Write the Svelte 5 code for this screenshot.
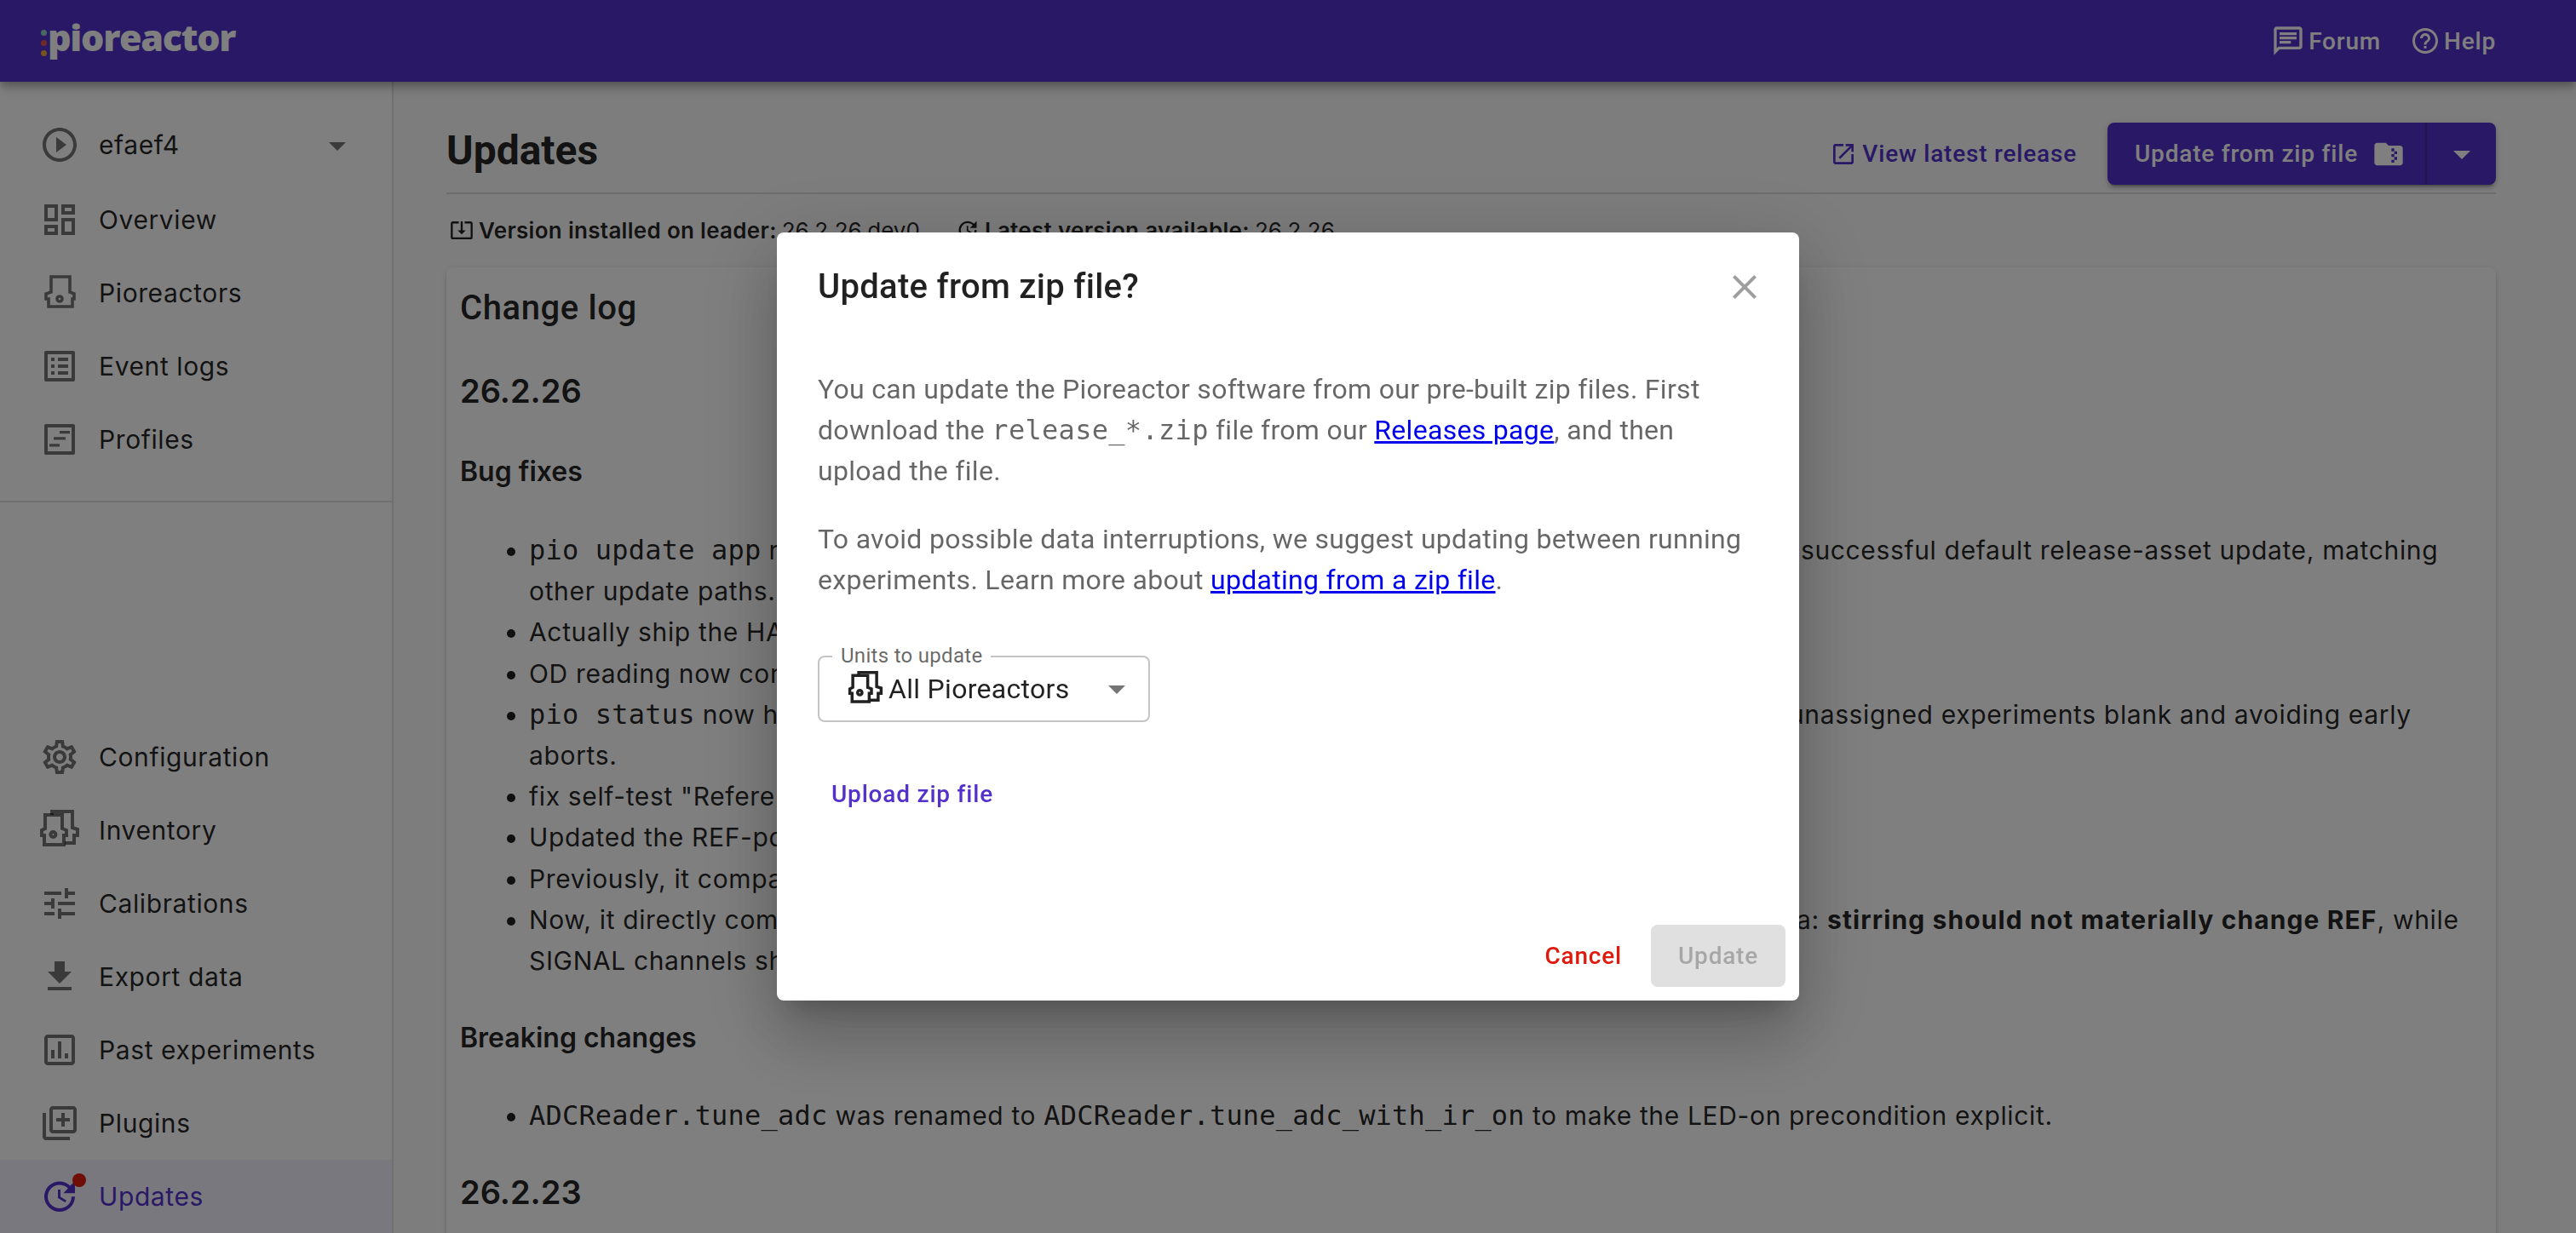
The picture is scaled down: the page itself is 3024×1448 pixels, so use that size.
<script lang="ts">
  const PIO = "M7 2.5H18V11.5L20.5 12.5V15.5H19.5V20H5.5V15.5H4V12.5L7 11.5Z";
  const BOX = "M19 5v14H5V5h14m1.1-2H3.9c-.5 0-.9.4-.9.9v16.2c0 .4.4.9.9.9h16.2c.4 0 .9-.5.9-.9V3.9c0-.5-.5-.9-.9-.9z";

  const topNav = [
    { label: "Overview", d: "M19 5v2h-4V5h4M9 5v6H5V5h4m10 8v6h-4v-6h4M9 17v2H5v-2h4M21 3h-8v6h8V3zM11 3H3v10h8V3zm10 8h-8v10h8V11zm-10 4H3v6h8v-6z" },
    { label: "Pioreactors", kind: "pio" },
    { label: "Event logs", d: BOX + "M11 7h6v2h-6V7zm0 4h6v2h-6v-2zm0 4h6v2h-6zM7 7h2v2H7zm0 4h2v2H7zm0 4h2v2H7z" },
    { label: "Profiles", d: BOX + "M12 7h6v1.6h-6zM8.5 10.6h7v1.6h-7zM6 14.6h6v1.6H6z" },
  ];
  const bottomNav = [
    { label: "Configuration", d: "M19.43 12.98c.04-.32.07-.64.07-.98 0-.34-.03-.66-.07-.98l2.11-1.65c.19-.15.24-.42.12-.64l-2-3.46c-.09-.16-.26-.25-.44-.25-.06 0-.12.01-.17.03l-2.49 1c-.52-.4-1.08-.73-1.69-.98l-.38-2.65C14.46 2.18 14.25 2 14 2h-4c-.25 0-.46.18-.49.42l-.38 2.65c-.61.25-1.17.59-1.69.98l-2.49-1c-.06-.02-.12-.03-.18-.03-.17 0-.34.09-.43.25l-2 3.46c-.13.22-.07.49.12.64l2.11 1.65c-.04.32-.07.65-.07.98 0 .33.03.66.07.98l-2.11 1.65c-.19.15-.24.42-.12.64l2 3.46c.09.16.26.25.44.25.06 0 .12-.01.17-.03l2.49-1c.52.4 1.08.73 1.69.98l.38 2.65c.03.24.24.42.49.42h4c.25 0 .46-.18.49-.42l.38-2.65c.61-.25 1.17-.59 1.69-.98l2.49 1c.06.02.12.03.18.03.17 0 .34-.09.43-.25l2-3.46c.12-.22.07-.49-.12-.64l-2.11-1.65zm-1.98-1.71c.04.31.05.52.05.73 0 .21-.02.43-.05.73l-.14 1.13.89.7 1.08.84-.7 1.21-1.27-.51-1.04-.42-.9.68c-.43.32-.84.56-1.25.73l-1.06.43-.16 1.13-.2 1.35h-1.4l-.19-1.35-.16-1.13-1.06-.43c-.43-.18-.83-.41-1.23-.71l-.91-.7-1.06.43-1.27.51-.7-1.21 1.08-.84.89-.7-.14-1.13c-.03-.31-.05-.54-.05-.74s.02-.43.05-.73l.14-1.13-.89-.7-1.08-.84.7-1.21 1.27.51 1.04.42.9-.68c.43-.32.84-.56 1.25-.73l1.06-.43.16-1.13.2-1.35h1.39l.19 1.35.16 1.13 1.06.43c.43.18.83.41 1.23.71l.91.7 1.06-.43 1.27-.51.7 1.21-1.07.85-.89.7.14 1.13zM12 8c-2.21 0-4 1.79-4 4s1.79 4 4 4 4-1.79 4-4-1.79-4-4-4zm0 6c-1.1 0-2-.9-2-2s.9-2 2-2 2 .9 2 2-.9 2-2 2z" },
    { label: "Inventory", kind: "pios" },
    { label: "Calibrations", d: "M3 17v2h6v-2H3zM3 5v2h10V5H3zm10 16v-2h8v-2h-8v-2h-2v6h2zM7 9v2H3v2h4v2h2V9H7zm14 4v-2H11v2h10zm-6-4h2V7h4V5h-4V3h-2v6z" },
    { label: "Export data", d: "M5 20h14v-2H5v2zM19 9h-4V3H9v6H5l7 7 7-7z" },
    { label: "Past experiments", d: "M9 17H7v-5h2v5zm4 0h-2V7h2v10zm4 0h-2v-3h2v3zm2 2H5V5h14v14zm0-16H5c-1.1 0-2 .9-2 2v14c0 1.1.9 2 2 2h14c1.1 0 2-.9 2-2V5c0-1.1-.9-2-2-2z" },
    { label: "Plugins", d: "M4 6H2v14c0 1.1.9 2 2 2h14v-2H4V6zm16-4H8c-1.1 0-2 .9-2 2v12c0 1.1.9 2 2 2h12c1.1 0 2-.9 2-2V4c0-1.1-.9-2-2-2zm0 14H8V4h12v12zm-7-2h2v-3h3V9h-3V6h-2v3h-3v2h3z" },
  ];
  const UPDATE = "M21 10.12h-6.78l2.74-2.82c-2.73-2.7-7.15-2.8-9.88-.1-2.73 2.71-2.73 7.08 0 9.79s7.15 2.71 9.88 0C18.32 15.65 19 14.08 19 12.1h2c0 1.98-.88 4.55-2.64 6.29-3.51 3.48-9.21 3.48-12.72 0-3.5-3.47-3.53-9.11-.02-12.58s9.14-3.47 12.65 0L21 3v7.12zM12.5 8v4.25l3.5 2.08-.72 1.21L11 13V8h1.5z";
</script>

{#snippet pioIcon()}
  <svg class="icon" viewBox="0 0 24 24" fill="none" stroke="currentColor" stroke-width="1.8">
    <path d={PIO} /><circle cx="12" cy="15.5" r="1.5" />
  </svg>
{/snippet}

{#snippet piosIcon(cls)}
  <svg class={cls} viewBox="0 0 24 24" fill="none" stroke="currentColor" stroke-width="2">
    <path d="M3.5 3H13.5V11L16 12V15H14.5V20.5H3V15H1.5V12L3.5 11Z" />
    <path d="M7.5 3V1H19.5V10.5L22.5 11.5V15H20.5V19.5H15" />
    <circle cx="8.2" cy="14.5" r="1.5" />
  </svg>
{/snippet}

{#snippet navRow(item)}
  <div class="row">
    {#if item.kind === "pio"}
      {@render pioIcon()}
    {:else if item.kind === "pios"}
      {@render piosIcon("icon")}
    {:else}
      <svg class="icon" viewBox="0 0 24 24" fill="currentColor"><path d={item.d} /></svg>
    {/if}
    <span>{item.label}</span>
  </div>
{/snippet}

<div class="page">
  <header class="appbar">
    <div class="logo">
      <span class="dots"><i class="d1"></i><i class="d2"></i><i class="d3"></i></span>
      <span class="wordmark">pioreactor</span>
    </div>
    <nav class="toplinks">
      <span class="toplink">
        <svg class="ic40" viewBox="0 0 24 24" fill="currentColor"><path d="M20 2H4c-1.1 0-1.99.9-1.99 2L2 22l4-4h14c1.1 0 2-.9 2-2V4c0-1.1-.9-2-2-2zm0 14H5.17L4 17.17V4h16v12zM6 12h8v2H6zm0-3h12v2H6zm0-3h12v2H6z" /></svg>
        Forum
      </span>
      <span class="toplink">
        <svg class="ic36" viewBox="0 0 24 24" fill="currentColor"><path d="M11 18h2v-2h-2v2zm1-16C6.48 2 2 6.48 2 12s4.48 10 10 10 10-4.48 10-10S17.52 2 12 2zm0 18c-4.41 0-8-3.59-8-8s3.59-8 8-8 8 3.59 8 8-3.59 8-8 8zm0-14c-2.21 0-4 1.79-4 4h2c0-1.1.9-2 2-2s2 .9 2 2c0 2-3 1.75-3 5h2c0-2.25 3-2.5 3-5 0-2.21-1.79-4-4-4z" /></svg>
        Help
      </span>
    </nav>
  </header>

  <div class="body">
    <aside class="sidebar">
      <div class="group first">
        <div class="row lead">
          <svg class="icon" viewBox="0 0 24 24" fill="currentColor"><path d="M10 16.5l6-4.5-6-4.5v9zM12 2C6.48 2 2 6.48 2 12s4.48 10 10 10 10-4.48 10-10S17.52 2 12 2zm0 18c-4.41 0-8-3.59-8-8s3.59-8 8-8 8 3.59 8 8-3.59 8-8 8z" /></svg>
          <span class="grow">efaef4</span>
          <svg class="icon caret" viewBox="0 0 24 24" fill="currentColor"><path d="M7 10l5 5 5-5z" /></svg>
        </div>
        {#each topNav as item}
          {@render navRow(item)}
        {/each}
      </div>
      <hr class="rule" />
      <div class="group last">
        {#each bottomNav as item}
          {@render navRow(item)}
        {/each}
        <div class="row active">
          <span class="badged">
            <svg class="icon" viewBox="0 0 24 24" fill="currentColor"><path d={UPDATE} /></svg>
            <i class="badge"></i>
          </span>
          <span>Updates</span>
        </div>
      </div>
    </aside>

    <main class="main">
      <div class="head">
        <h1>Updates</h1>
        <div class="actions">
          <span class="release">
            <svg class="ic32" viewBox="0 0 24 24" fill="currentColor"><path d="M19 19H5V5h7V3H5c-1.11 0-2 .9-2 2v14c0 1.1.89 2 2 2h14c1.1 0 2-.9 2-2v-7h-2v7zM14 3v2h3.59l-9.83 9.83 1.41 1.41L19 6.41V10h2V3h-7z" /></svg>
            View latest release
          </span>
          <div class="split">
            <span class="split-main">
              Update from zip file
              <svg class="ic40" viewBox="0 0 24 24" fill="currentColor"><path d="M20 6h-8l-2-2H4c-1.1 0-1.99.9-1.99 2L2 18c0 1.1.9 2 2 2h16c1.1 0 2-.9 2-2V8c0-1.1-.9-2-2-2zm-2 6h-2v2h2v2h-2v2h-2v-2h2v-2h-2v-2h2v-2h-2V8h2v2h2v2z" /></svg>
            </span>
            <span class="split-arrow">
              <svg class="icon" viewBox="0 0 24 24" fill="currentColor"><path d="M7 10l5 5 5-5z" /></svg>
            </span>
          </div>
        </div>
      </div>

      <div class="versions">
        <span class="ver first-ver">
          <svg class="ic28" viewBox="0 0 24 24" fill="currentColor"><path d="M12 16.5l4-4h-3v-9h-2v9H8l4 4zm9-13h-6v1.99h6v14.03H3V5.49h6V3.5H3c-1.1 0-2 .9-2 2v14c0 1.1.9 2 2 2h18c1.1 0 2-.9 2-2v-14c0-1.1-.9-2-2-2z" /></svg>
          <b>Version installed on leader:</b>26.2.26.dev0
        </span>
        <span class="ver">
          <svg class="ic28" viewBox="0 0 24 24" fill="currentColor"><path d={UPDATE} /></svg>
          <b>Latest version available:</b>26.2.26
        </span>
      </div>

      <section class="card">
        <h2>Change log</h2>
        <h3>26.2.26</h3>
        <h4>Bug fixes</h4>
        <ul>
          <li><code>pio update app</code> runs the database migrations, and restarts all the web server, and workers after a successful default release-asset update, matching<br />other update paths.</li>
          <li>Actually ship the HAT firmware files inside the release archive.</li>
          <li>OD reading now correctly handles missing reference channels.</li>
          <li><code>pio status</code> now handles leader-only installs, and workers in the cluster gracefully, and leaving all unassigned experiments blank and avoiding early<br />aborts.</li>
          <li>fix self-test "Reference photodiode" check.</li>
          <li>Updated the REF-pd self-test logic.</li>
          <li>Previously, it compared unrelated values.</li>
          <li>Now, it directly compares the reference readings with the stirrer on and off, against the expected data: <strong>stirring should not materially change REF</strong>, while<br />SIGNAL channels should still respond.</li>
        </ul>
        <h4 class="breaking">Breaking changes</h4>
        <ul class="tight">
          <li><code>ADCReader.tune_adc</code> was renamed to <code>ADCReader.tune_adc_with_ir_on</code> to make the LED-on precondition explicit.</li>
        </ul>
        <h3 class="next">26.2.23</h3>
      </section>
    </main>
  </div>

  <div class="backdrop">
    <div class="dialog" role="dialog">
      <div class="dialog-title">
        <h5>Update from zip file?</h5>
        <svg class="close" viewBox="0 0 24 24" fill="currentColor"><path d="M19 6.41 17.59 5 12 10.59 6.41 5 5 6.41 10.59 12 5 17.59 6.41 19 12 13.41 17.59 19 19 17.59 13.41 12z" /></svg>
      </div>
      <div class="dialog-body">
        <p>You can update the Pioreactor software from our pre-built zip files. First download the <code>release_*.zip</code> file from our <a href="#top">Releases page</a>, and then upload the file.</p>
        <p>To avoid possible data interruptions, we suggest updating between running experiments. Learn more about <a href="#top">updating from a zip file</a>.</p>
        <div class="select">
          <span class="select-label">Units to update</span>
          {@render piosIcon("select-icon")}
          <span class="select-value">All Pioreactors</span>
          <svg class="icon select-caret" viewBox="0 0 24 24" fill="currentColor"><path d="M7 10l5 5 5-5z" /></svg>
        </div>
        <button class="upload">Upload zip file</button>
      </div>
      <div class="dialog-actions">
        <button class="cancel">Cancel</button>
        <button class="confirm" disabled>Update</button>
      </div>
    </div>
  </div>
</div>

<style>
  :global(body) {
    margin: 0;
    overflow: hidden;
  }

  .page {
    height: 1448px;
    display: flex;
    flex-direction: column;
    background: #fafafa;
    color: rgba(0, 0, 0, 0.87);
    font-family: Inter, "Liberation Sans", sans-serif;
    overflow: hidden;
  }

  .appbar {
    height: 96px;
    flex-shrink: 0;
    display: flex;
    align-items: center;
    justify-content: space-between;
    padding: 0 94px 0 48px;
    background: #5331ca;
    color: #fff;
    position: relative;
    z-index: 2;
    box-shadow: 0 4px 8px -2px rgba(0, 0, 0, 0.2), 0 8px 10px 0 rgba(0, 0, 0, 0.14), 0 2px 20px 0 rgba(0, 0, 0, 0.12);
  }

  .logo {
    display: flex;
    align-items: center;
    height: 44px;
    margin-top: -8px;
  }
  .dots {
    display: flex;
    flex-direction: column;
    gap: 5px;
    margin-top: 12px;
  }
  .dots i {
    width: 7px;
    height: 7px;
    border-radius: 50%;
    display: block;
  }
  .d1 { background: #8fd4c0; }
  .d2 { background: #e0554d; }
  .d3 { background: #f0a63c; }
  .wordmark {
    font-family: "Open Sans", sans-serif;
    font-weight: 800;
    font-size: 43px;
    letter-spacing: -1.3px;
    margin-left: 1px;
    line-height: 44px;
  }

  .toplinks {
    display: flex;
    align-items: center;
    gap: 34px;
  }
  .toplink {
    display: flex;
    align-items: center;
    gap: 4px;
    font-family: Roboto, sans-serif;
    font-weight: 500;
    font-size: 28px;
    letter-spacing: 0.8px;
  }

  .ic28 { width: 28px; height: 28px; flex-shrink: 0; }
  .ic32 { width: 32px; height: 32px; flex-shrink: 0; }
  .ic36 { width: 36px; height: 36px; flex-shrink: 0; }
  .ic40 { width: 40px; height: 40px; flex-shrink: 0; }
  .icon { width: 48px; height: 48px; flex-shrink: 0; }

  .body {
    flex: 1;
    display: flex;
    min-height: 0;
  }

  .sidebar {
    width: 460px;
    flex-shrink: 0;
    background: #fff;
    border-right: 2px solid rgba(0, 0, 0, 0.12);
    display: flex;
    flex-direction: column;
  }
  .group.first { padding-top: 31px; }
  .group.last { margin-top: auto; }
  .rule {
    margin: 29px 0 0;
    border: 0;
    border-top: 2px solid rgba(0, 0, 0, 0.12);
  }
  .row {
    height: 86px;
    display: flex;
    align-items: center;
    padding-left: 46px;
    gap: 22px;
    font-size: 30px;
    letter-spacing: 0.6px;
    color: rgba(0, 0, 0, 0.87);
  }
  .row.lead { margin-bottom: 2px; }
  .row .icon { color: rgba(0, 0, 0, 0.54); }
  .grow { flex: 1; }
  .caret { margin-right: 40px; margin-top: 2px; }
  .active {
    background: #f4f0ff;
    color: #5331ca;
  }
  .active .icon { color: #5331ca; }
  .badged {
    position: relative;
    display: flex;
  }
  .badge {
    position: absolute;
    width: 16px;
    height: 16px;
    border-radius: 50%;
    background: #df1a0c;
    top: -3px;
    left: 39px;
  }

  .main {
    flex: 1;
    min-width: 0;
    padding: 0 94px 0 62px;
  }
  .head {
    height: 132px;
    box-sizing: border-box;
    padding-top: 48px;
    display: flex;
    justify-content: space-between;
    align-items: flex-start;
    border-bottom: 2px solid rgba(0, 0, 0, 0.12);
  }
  h1 {
    margin: 2px 0 0;
    font-family: Roboto, sans-serif;
    font-size: 48px;
    font-weight: 700;
    line-height: 62px;
  }
  .actions {
    display: flex;
    align-items: center;
    gap: 36px;
    height: 73px;
  }
  .release {
    display: flex;
    align-items: center;
    gap: 6px;
    font-family: Roboto, sans-serif;
    font-weight: 500;
    font-size: 28px;
    letter-spacing: 0.8px;
    color: #5331ca;
  }
  .split {
    display: flex;
    width: 456px;
    height: 73px;
    border-radius: 8px;
    background: #5331ca;
    color: #fff;
    font-family: Roboto, sans-serif;
    font-weight: 500;
    font-size: 28px;
    letter-spacing: 0.8px;
    box-shadow: 0 6px 2px -4px rgba(0, 0, 0, 0.2), 0 4px 4px 0 rgba(0, 0, 0, 0.14), 0 2px 10px 0 rgba(0, 0, 0, 0.12);
  }
  .split-main {
    width: 375px;
    box-sizing: border-box;
    padding-left: 32px;
    display: flex;
    align-items: center;
    gap: 16px;
    border-right: 2px solid #432aa0;
  }
  .split-arrow {
    flex: 1;
    display: flex;
    align-items: center;
    justify-content: center;
  }

  .versions {
    display: flex;
    height: 86px;
    padding: 0 0 0 4px;
    font-size: 26px;
  }
  .ver {
    display: flex;
    align-items: center;
    height: 84px;
    gap: 6px;
  }
  .ver b { font-weight: 600; letter-spacing: 0.3px; }
  .first-ver { margin-right: 42px; }

  .card {
    background: #fff;
    border-radius: 8px;
    padding: 24px 16px 60px;
    box-shadow: 0 2px 2px -2px rgba(0, 0, 0, 0.2), 0 2px 2px 0 rgba(0, 0, 0, 0.14), 0 2px 6px 0 rgba(0, 0, 0, 0.12);
    font-size: 30px;
    letter-spacing: 0.65px;
    line-height: 48.2px;
    white-space: nowrap;
  }
  h2, h3, h4 {
    margin: 0;
    line-height: 48px;
    letter-spacing: 0;
  }
  h2 { font-size: 40px; font-weight: 500; font-family: Roboto, sans-serif; letter-spacing: 0.6px; }
  h3 { font-size: 38px; font-weight: 600; margin-top: 49px; }
  h4 { font-size: 32px; font-weight: 600; margin-top: 47px; }
  h4.breaking { margin-top: 43px; }
  h3.next { margin-top: 42px; }
  ul {
    margin: 44px 0 0;
    padding: 0 0 0 81px;
  }
  ul.tight { margin-top: 43px; }
  strong { font-weight: 700; letter-spacing: 1.1px; }
  code {
    font-family: "DejaVu Sans Mono", monospace;
    font-size: 32px;
    letter-spacing: 0.2px;
  }

  .backdrop {
    position: fixed;
    inset: 0;
    z-index: 10;
    background: rgba(0, 0, 0, 0.5);
    display: flex;
    align-items: center;
    justify-content: center;
  }
  .dialog {
    width: 1200px;
    height: 902px;
    box-sizing: border-box;
    display: flex;
    flex-direction: column;
    background: #fff;
    border-radius: 8px;
    font-family: Roboto, sans-serif;
    box-shadow: 0 22px 30px -14px rgba(0, 0, 0, 0.2), 0 48px 76px 6px rgba(0, 0, 0, 0.14), 0 18px 92px 16px rgba(0, 0, 0, 0.12);
  }
  .dialog-title {
    display: flex;
    align-items: center;
    justify-content: space-between;
    padding: 32px 40px 0 48px;
    height: 64px;
  }
  h5 {
    margin: 0;
    font-size: 40px;
    font-weight: 500;
    line-height: 64px;
    letter-spacing: 0.3px;
  }
  .close {
    width: 48px;
    height: 48px;
    color: #9e9e9e;
  }
  .dialog-body {
    flex: 1;
    padding: 64px 48px 0;
  }
  p {
    margin: 0 0 32px;
    font-size: 32px;
    line-height: 48px;
    letter-spacing: 0.3px;
    color: rgba(0, 0, 0, 0.6);
  }
  p code { letter-spacing: 0.3px; }
  a { color: #0000ee; }

  .select {
    position: relative;
    width: 390px;
    height: 78px;
    margin-top: 65px;
    box-sizing: border-box;
    border: 2px solid #c4c4c4;
    border-radius: 8px;
    display: flex;
    align-items: center;
    padding-left: 33px;
  }
  .select-label {
    position: absolute;
    top: -18px;
    left: 15px;
    padding: 0 10px 0 10px;
    background: #fff;
    font-size: 24px;
    line-height: 32px;
    letter-spacing: 0.3px;
    color: rgba(0, 0, 0, 0.6);
  }
  :global(.select-icon) {
    width: 42px;
    height: 42px;
    flex-shrink: 0;
    color: #212121;
  }
  .select-value {
    margin-left: 6px;
    font-size: 32px;
    letter-spacing: 0.3px;
  }
  .select-caret {
    position: absolute;
    right: 13px;
    top: 13px;
    color: #757575;
  }

  button {
    font-family: Roboto, sans-serif;
    font-weight: 500;
    font-size: 28px;
    letter-spacing: 0.8px;
    border: 0;
    background: none;
    border-radius: 8px;
    padding: 0;
    height: 73px;
  }
  .upload {
    display: block;
    margin-top: 48px;
    padding: 0 16px;
    color: #5331ca;
  }
  .dialog-actions {
    display: flex;
    justify-content: flex-end;
    align-items: center;
    gap: 34px;
    padding: 0 16px 16px;
  }
  .cancel { color: #df1a0c; }
  .confirm {
    width: 158px;
    background: #e0e0e0;
    color: rgba(0, 0, 0, 0.26);
  }
</style>
